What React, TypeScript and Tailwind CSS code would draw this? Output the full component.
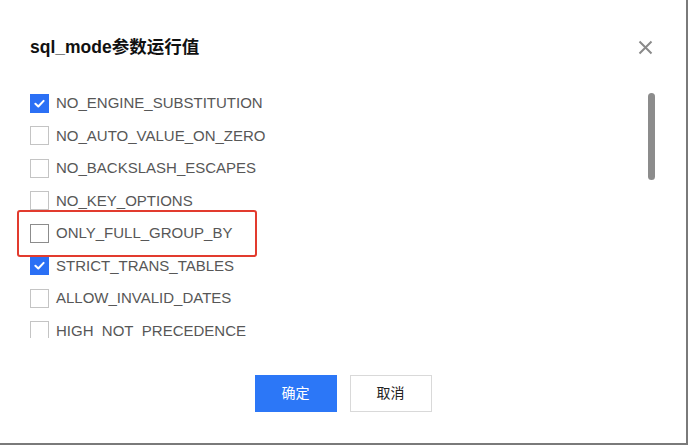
const modes = [
  { name: "NO_ENGINE_SUBSTITUTION", checked: true },
  { name: "NO_AUTO_VALUE_ON_ZERO", checked: false },
  { name: "NO_BACKSLASH_ESCAPES", checked: false },
  { name: "NO_KEY_OPTIONS", checked: false },
  { name: "ONLY_FULL_GROUP_BY", checked: false, hover: true },
  { name: "STRICT_TRANS_TABLES", checked: true },
  { name: "ALLOW_INVALID_DATES", checked: false },
  { name: "HIGH_NOT_PRECEDENCE", checked: false },
];

function Checkbox({ checked, hover }: { checked: boolean; hover?: boolean }) {
  if (checked) {
    return (
      <span className="w-[19px] h-[19px] bg-[#2b70f5] flex items-center justify-center shrink-0">
        <svg width="13" height="13" viewBox="0 0 12 12" fill="none">
          <path d="M2.2 6.2 L4.9 8.7 L9.8 3.6" stroke="white" strokeWidth="1.9" strokeLinecap="round" strokeLinejoin="round" />
        </svg>
      </span>
    );
  }
  return (
    <span
      className={`w-[19px] h-[19px] bg-white border shrink-0 ${hover ? "border-[#8c8c8c]" : "border-[#c4c4c4]"}`}
    />
  );
}

export default function App() {
  return (
    <div className="w-[688px] h-[445px] bg-[#7a7a7a] overflow-hidden" style={{ fontFamily: '"Liberation Sans", Arial, "Noto Sans CJK SC", sans-serif' }}>
      <div className="relative w-[686px] h-[443px] bg-white flex flex-col">
        <div className="h-[87px] flex items-start justify-between pl-[30px] pr-[33px] pt-[36px]">
          <h2 className="text-[17.5px] leading-[22px] font-bold text-[#111]">sql_mode参数运行值</h2>
          <svg width="15" height="15" viewBox="0 0 15 15" className="mt-[4px]">
            <path d="M1.5 1.5 L13.5 13.5 M13.5 1.5 L1.5 13.5" stroke="#8a8a8a" strokeWidth="2" />
          </svg>
        </div>

        <div className="relative h-[251px] overflow-hidden pl-[30px]">
          {modes.map((m) => (
            <div key={m.name} className="h-[32.5px] flex items-center gap-[7px]">
              <Checkbox checked={m.checked} hover={m.hover} />
              <span className="text-[15px] leading-[18px] text-[#575757]">{m.name}</span>
            </div>
          ))}
          <div className="absolute left-[648px] top-[6px] w-[7px] h-[87px] rounded-full bg-[#8c8c8c]" />
        </div>

        <div className="flex justify-center gap-[13px] pt-[37px]">
          <button className="w-[82px] h-[37px] bg-[#2c77f7] text-white text-[14px]">确定</button>
          <button className="w-[82px] h-[37px] bg-white border border-[#d9d9d9] text-[#222] text-[14px]">取消</button>
        </div>

        <div className="absolute left-[17px] top-[210px] w-[240px] h-[47px] border-2 border-[#e23b2e] rounded-[3px]" />
      </div>
    </div>
  );
}
